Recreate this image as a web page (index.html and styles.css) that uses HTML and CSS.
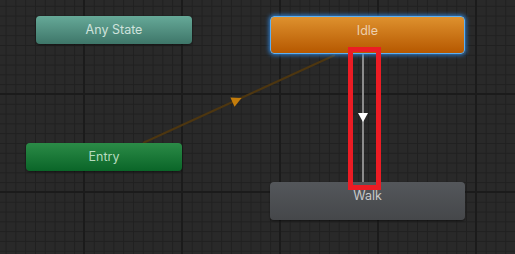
FILE: index.html
```html
<!DOCTYPE html>
<html lang="en">
  <head>
    <meta charset="UTF-8" />
    <title>Animator</title>
    <link rel="stylesheet" href="styles.css">
  </head>
  <body>
    <div class="graph">
      <svg class="edges" width="515" height="254" viewBox="0 0 515 254">
        <!-- Entry -> Idle -->
        <line x1="143" y1="143" x2="335" y2="55" class="edge-default" />
        <polygon points="-5,-5 5,0 -5,5" class="arrow-default"
          transform="translate(237 100) rotate(-24.6)" />
        <!-- Idle -> Walk -->
        <line x1="363" y1="54" x2="363" y2="182" class="edge" />
        <polygon points="358,113 368,113 363,122" class="arrow" />
      </svg>

      <div class="node any-state" style="left: 36px; top: 16px">Any State</div>
      <div class="node idle" style="left: 270px; top: 16px">Idle</div>
      <div class="node entry" style="left: 26px; top: 143px">Entry</div>
      <div class="node walk" style="left: 270px; top: 182px">Walk</div>

      <div class="highlight"></div>
    </div>
  </body>
</html>
```

FILE: styles.css
```css
body {
  margin: 0;
  background: #282828;
  font-family: "Inter", "Noto Sans", sans-serif;
}

.graph {
  position: relative;
  width: 515px;
  height: 254px;
  overflow: hidden;
  background-color: #292929;
  background-image:
    linear-gradient(to right, #1b1b1b 2px, transparent 2px),
    linear-gradient(to bottom, #1b1b1b 2px, transparent 2px),
    linear-gradient(to right, #202020 1px, transparent 1px),
    linear-gradient(to bottom, #202020 1px, transparent 1px);
  background-size: 98px 98px, 98px 98px, 9.8px 9.8px, 9.8px 9.8px;
  background-position: 83px 0, 0 93px, 5.6px 0, 0 5.8px;
}

.edges {
  position: absolute;
  left: 0;
  top: 0;
}

.edge-default {
  stroke: #4d3610;
  stroke-width: 2;
}

.arrow-default {
  fill: #c47d0c;
}

.edge {
  stroke: #8c8c8c;
  stroke-width: 2;
}

.arrow {
  fill: #fff;
}

.node {
  position: absolute;
  box-sizing: border-box;
  width: 156px;
  height: 28px;
  border-radius: 4px;
  font-size: 12.5px;
  line-height: 28px;
  text-align: center;
  box-shadow: 0 1px 2px rgba(0, 0, 0, 0.5);
}

.any-state {
  background: linear-gradient(#66a998, #3e7669);
  color: #cfe2dc;
}

.entry {
  background: linear-gradient(#2b8b47, #0a6528);
  color: #b6dbbf;
}

.idle {
  width: 195px;
  height: 38px;
  line-height: 28px;
  background: linear-gradient(#de912e, #b65800);
  color: #eccfae;
  border: 1px solid #5cb0f4;
  box-shadow: 0 0 4px 1px #2f82d6;
}

.walk {
  width: 195px;
  height: 38px;
  line-height: 28px;
  background: linear-gradient(#54575b, #45474a);
  color: #c9c9c9;
}

.highlight {
  position: absolute;
  left: 348px;
  top: 47px;
  width: 33px;
  height: 143px;
  box-sizing: border-box;
  border: 5px solid #ec1c24;
}
```
